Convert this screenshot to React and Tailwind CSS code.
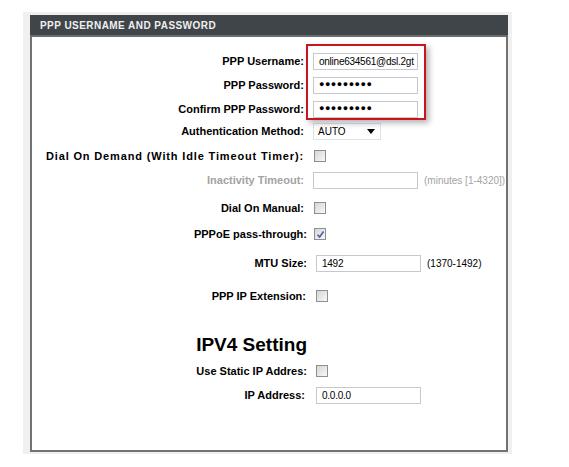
import React from 'react'

const font = { fontFamily: '"Liberation Sans", Arial, sans-serif' }

const Checkbox = ({ checked }) => (
  <span className="flex h-[12px] w-[12px] items-center justify-center border border-[#8e8f8f] bg-gradient-to-br from-[#d6d6d6] to-[#f8f8f8]">
    {checked && (
      <svg width="9" height="9" viewBox="0 0 9 9">
        <path d="M1.5 4.8 L3.6 7 L7.6 1.6" fill="none" stroke="#4b5fa5" strokeWidth="1.6" />
      </svg>
    )}
  </span>
)

const TextBox = ({ value, w = 'w-[105px]', dots }) => (
  <div className={`flex h-[17px] items-center border border-[#c4c8cf] bg-white pl-[5px] ${w} overflow-hidden whitespace-nowrap`}>
    {dots ? (
      <span className="text-[9px] tracking-[0.5px] text-black">●●●●●●●●●</span>
    ) : (
      <span className="text-[10px] tracking-[-0.25px] text-black">{value}</span>
    )}
  </div>
)

const Row = ({ label, mt, lw = 'w-[272px]', gap = 'ml-[9px]', muted, wide, children }) => (
  <div className={`flex h-[20px] items-center ${mt}`}>
    <div className={`${lw} shrink-0 whitespace-nowrap text-right text-[11px] font-bold ${wide ? 'tracking-[0.85px]' : ''} ${muted ? 'text-[#a3a3a3]' : 'text-black'}`}>{label}</div>
    <div className={`${gap} flex items-center`}>{children}</div>
  </div>
)

export default function App() {
  return (
    <div className="h-[467px] w-[569px] bg-white pl-[23px] pt-[12px]" style={font}>
      <div className="w-[489px] bg-[#f0f0f0] pb-[2px] pl-[7px] pr-[4px] pt-[3px]">
        <div className="relative h-[437px] border-x-2 border-b-2 border-[#727272] bg-white">
          <div className="-mx-[2px] flex h-[22px] items-center border-b-2 border-[#6c6c6c] bg-[#3f4548] pl-[10px]">
            <span className="text-[10px] font-bold tracking-[0.45px] text-[#f0f0f0]">PPP USERNAME AND PASSWORD</span>
          </div>

          <Row label="PPP Username:" mt="mt-[14px]">
            <TextBox value="online634561@dsl.2gt" />
          </Row>
          <Row label="PPP Password:" mt="mt-[4px]">
            <TextBox dots />
          </Row>
          <Row label="Confirm PPP Password:" mt="mt-[4px]">
            <TextBox dots />
          </Row>
          <Row label="Authentication Method:" mt="mt-[2px]">
            <div className="flex h-[17px] w-[68px] items-center justify-between border border-[#dfe3e8] bg-white pl-[4px] pr-[5px]">
              <span className="text-[10px] text-black">AUTO</span>
              <svg width="8" height="5" viewBox="0 0 8 5">
                <path d="M0 0 H8 L4 5 Z" fill="#000" />
              </svg>
            </div>
          </Row>
          <Row label="Dial On Demand (With Idle Timeout Timer):" mt="mt-[5px]" gap="ml-[10px]" wide>
            <Checkbox />
          </Row>
          <Row label="Inactivity Timeout:" mt="mt-[4px]" muted>
            <TextBox value="" />
            <span className="ml-[6px] text-[10px] text-[#a3a3a3]">(minutes [1-4320])</span>
          </Row>
          <Row label="Dial On Manual:" mt="mt-[8px]" gap="ml-[10px]">
            <Checkbox />
          </Row>
          <Row label="PPPoE pass-through:" mt="mt-[6px]" lw="w-[275px]" gap="ml-[7px]">
            <Checkbox checked />
          </Row>
          <Row label="MTU Size:" mt="mt-[9px]" lw="w-[275px]" gap="ml-[9px]">
            <TextBox value="1492" />
            <span className="ml-[6px] text-[10px] text-black">(1370-1492)</span>
          </Row>
          <Row label="PPP IP Extension:" mt="mt-[13px]" lw="w-[274px]" gap="ml-[10px]">
            <Checkbox />
          </Row>

          <div className="mt-[27px] flex h-[24px] items-center">
            <div className="w-[275px] text-right text-[19px] font-bold text-black">IPV4 Setting</div>
          </div>

          <Row label="Use Static IP Addres:" mt="mt-[4px]" lw="w-[275px]" gap="ml-[9px]">
            <Checkbox />
          </Row>
          <Row label="IP Address:" mt="mt-[4px]" lw="w-[273px]" gap="ml-[11px]">
            <TextBox value="0.0.0.0" />
          </Row>

          <div className="absolute left-[274px] top-[29px] h-[76px] w-[120px] border-2 border-[#c8141e] shadow-[3px_3px_6px_rgba(0,0,0,0.3)]" />
        </div>
      </div>
    </div>
  )
}
